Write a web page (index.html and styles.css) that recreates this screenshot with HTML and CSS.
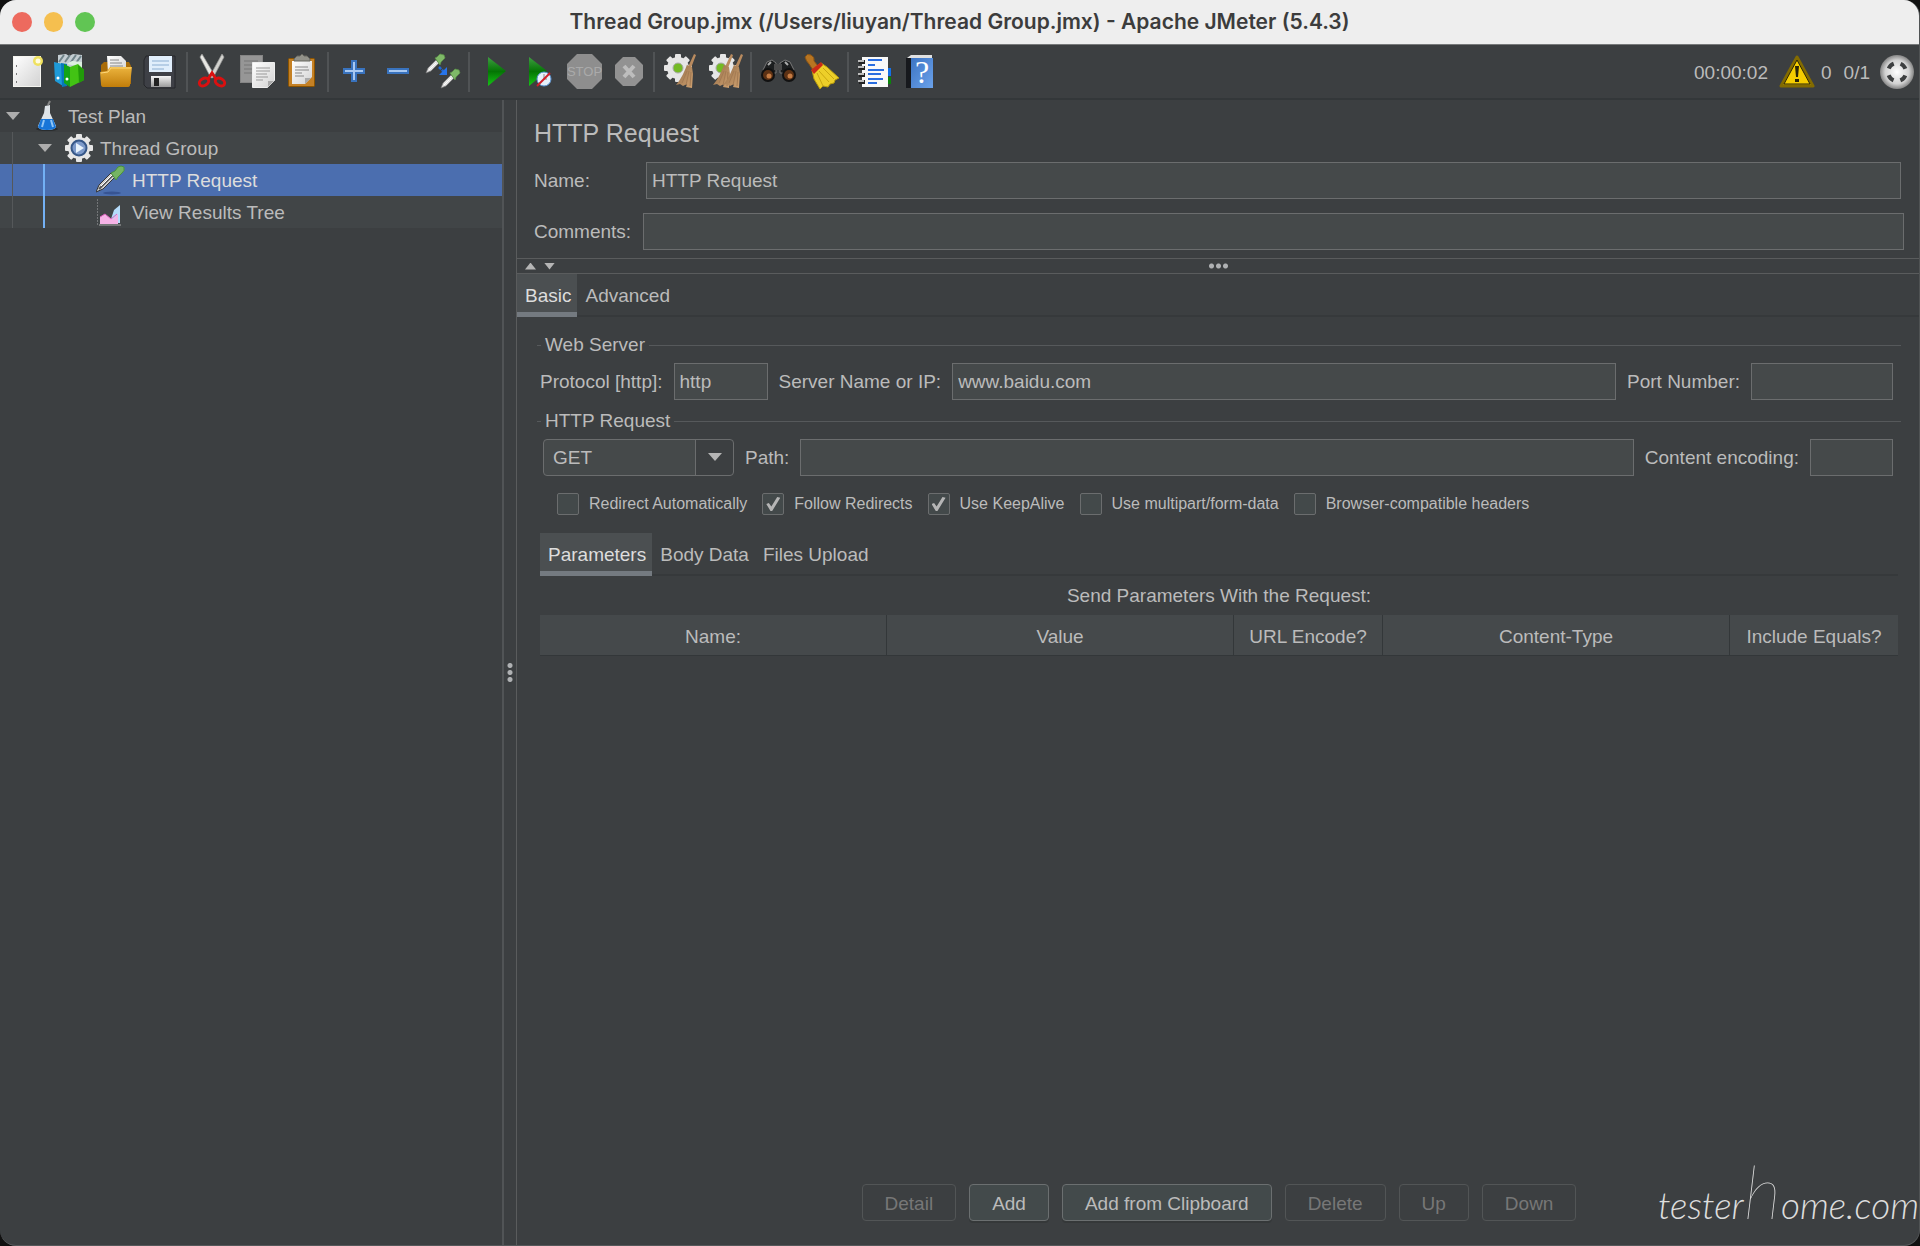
FILE: index.html
```html
<!DOCTYPE html>
<html lang="en">
<head>
  <meta charset="utf-8">
  <title>Thread Group.jmx - Apache JMeter (5.4.3)</title>
  <link rel="stylesheet" href="styles.css">
</head>
<body>
  <!-- shared gradients and shapes -->
  <svg class="defs" aria-hidden="true">
    <defs>
      <linearGradient id="paper" x1="0" y1="0" x2="1" y2="1"><stop offset="0" stop-color="#fff"/><stop offset="1" stop-color="#d2d2d2"/></linearGradient>
      <linearGradient id="steel" x1="0" y1="0" x2="0" y2="1"><stop offset="0" stop-color="#f4f4f4"/><stop offset="1" stop-color="#9b9b9b"/></linearGradient>
      <linearGradient id="gold" x1="0" y1="0" x2="0" y2="1"><stop offset="0" stop-color="#ecb43e"/><stop offset="1" stop-color="#c17d0a"/></linearGradient>
      <linearGradient id="green" x1="0" y1="0" x2="0" y2="1"><stop offset="0" stop-color="#3f9d42"/><stop offset=".5" stop-color="#047504"/><stop offset="1" stop-color="#16c516"/></linearGradient>
      <linearGradient id="book" x1="0" y1="0" x2="1" y2="1"><stop offset="0" stop-color="#3c74c4"/><stop offset="1" stop-color="#6ba2ea"/></linearGradient>
      <linearGradient id="straw" x1="0" y1="0" x2="1" y2="1"><stop offset="0" stop-color="#8d6844"/><stop offset="1" stop-color="#d0a271"/></linearGradient>
      <radialGradient id="ball"><stop offset="0" stop-color="#fff"/><stop offset=".7" stop-color="#d2d2d2"/><stop offset="1" stop-color="#858585"/></radialGradient>
      <g id="gear">
        <g fill="#e6e6e6">
          <rect x="-3" y="-14" width="6" height="28" rx="1"/>
          <rect x="-3" y="-14" width="6" height="28" rx="1" transform="rotate(45)"/>
          <rect x="-3" y="-14" width="6" height="28" rx="1" transform="rotate(90)"/>
          <rect x="-3" y="-14" width="6" height="28" rx="1" transform="rotate(135)"/>
          <circle r="11"/>
        </g>
      </g>
      <g id="broom">
        <path d="M15 0l2 1-5 13-3-1z" fill="#b98b5f"/>
        <path d="M8 11l5 2 1 7-1 14-6-1 1-3-4 2-3-2-4 1c5-6 9-14 12-23z" fill="url(#straw)"/>
        <path d="M8 17L3 29M10 17L7 31M12 18l-1 14" stroke="#a47b53" fill="none"/>
      </g>
      <g id="dropper">
        <path d="M0 19l2-5 8-8 3 3-8 8z" fill="#e2e2e2" stroke="#777" stroke-width=".7"/>
        <path d="M3 16l7-7" stroke="#fff"/>
        <path d="M9 4l2-1 3-3 4 1 1 3-4 4-1 3z" fill="#7fb968" stroke="#5a9446" stroke-width=".7"/>
      </g>
    </defs>
  </svg>

  <div class="window">
    <header class="titlebar">
      <div class="lights">
        <span class="light light-close"></span>
        <span class="light light-min"></span>
        <span class="light light-max"></span>
      </div>
      <h1>Thread Group.jmx (/Users/liuyan/Thread Group.jmx) - Apache JMeter (5.4.3)</h1>
    </header>

    <div class="toolbar">
      <button class="tool" aria-label="New">
        <svg viewBox="0 0 44 44"><rect x="8.500" y="6.500" width="27" height="30" fill="url(#paper)" stroke="#f4f4ef"/><path d="M11 16h1M11 24h1M11 32h1" stroke="#777" stroke-width="2"/><circle cx="33" cy="11" r="5" fill="#efe15f"/><circle cx="33" cy="11" r="2.500" fill="#fffce0"/></svg>
      </button>
      <button class="tool" aria-label="Templates">
        <svg viewBox="0 0 44 44"><path d="M9 5l8-1 3 2 4-2 9 1v14L9 16z" fill="#c3cdd2"/><path d="M10 12l5-7M16 12l5-7M22 12l5-7M27 13l5-7" stroke="#6f8389" stroke-width="2"/><path d="M5 12l9 2v22L6 31z" fill="#1e9ad8"/><path d="M12 13l6 1v22l-5 1z" fill="#0878ba"/><path d="M18 14l5-3 10 1v5z" fill="#dcefe0"/><path d="M15 14l6 3v20l-6-4z" fill="#13a416"/><path d="M21 17l8-3 6 6v10l-14 7z" fill="#42c314"/><path d="M29 15l6 5v10l-5 3z" fill="#219a09"/><circle cx="9" cy="28" r="1.500" fill="#fff"/><circle cx="18" cy="29" r="1.500" fill="#fff"/></svg>
      </button>
      <button class="tool" aria-label="Open">
        <svg viewBox="0 0 44 44"><path d="M8 15l3-3h25l2 4v18H8z" fill="#a96c09"/><path d="M14 6h14l5 5v12H15z" fill="url(#paper)"/><path d="M17 10h9M17 13h12M17 16h13" stroke="#888"/><path d="M7 22l7-1 3-4h22l-2 18q0 2-3 2H10q-2 0-2-3z" fill="url(#gold)"/><path d="M8 23l7-1 3-4h20" stroke="#ffd879" fill="none"/></svg>
      </button>
      <button class="tool" aria-label="Save">
        <svg viewBox="0 0 44 44"><path d="M9 6h29v32H10l-3-3V10z" fill="#3e4046" stroke="#25262a"/><rect x="12" y="6" width="23" height="16" fill="#e0eefb"/><path d="M15 11h17M15 15h17M15 19h12" stroke="#8caed1"/><rect x="14" y="26" width="20" height="11" fill="url(#steel)"/><rect x="17" y="28" width="5" height="8" fill="#222"/></svg>
      </button>
      <span class="tool-sep"></span>
      <button class="tool" aria-label="Cut">
        <svg viewBox="0 0 44 44"><path d="M10 7l2-3 13 22-4 2z" fill="#e7e7e3" stroke="#999" stroke-width=".7"/><path d="M34 7l-2-3-12 22 3 2z" fill="#d2d2ce" stroke="#999" stroke-width=".7"/><g fill="none" stroke="#da1010" stroke-width="3"><ellipse cx="14" cy="32" rx="5" ry="3.500" transform="rotate(-30 14 32)"/><ellipse cx="30" cy="32" rx="5" ry="3.500" transform="rotate(30 30 32)"/><path d="M18 29l4-6 4 6"/></g></svg>
      </button>
      <button class="tool" aria-label="Copy">
        <svg viewBox="0 0 44 44"><rect x="6.500" y="5.500" width="22" height="27" fill="#969696" stroke="#858585"/><path d="M10 11h14M10 15h14M10 19h8M10 23h8" stroke="#777"/><path d="M18.500 12.500h22v18l-7 7h-15z" fill="url(#paper)" stroke="#eee"/><path d="M34 37v-6h6z" fill="#aaa"/><path d="M22 18h14M22 21h14M22 24h11M22 27h12M22 30h7" stroke="#999"/></svg>
      </button>
      <button class="tool" aria-label="Paste">
        <svg viewBox="0 0 44 44"><rect x="10.500" y="8.500" width="26" height="28" rx="1" fill="#c58125" stroke="#8b5400"/><path d="M14 11h20v16l-7 7H14z" fill="url(#paper)"/><path d="M27 34v-6h6z" fill="#aaa"/><path d="M16 9l3-3h3l2-2 2 2h3l3 3v2H16z" fill="#92928a" stroke="#66665f"/><path d="M17 17h13M17 20h14M17 23h7M17 26h9" stroke="#888"/></svg>
      </button>
      <span class="tool-sep"></span>
      <button class="tool" aria-label="Expand All">
        <svg viewBox="0 0 44 44"><path d="M21 11h4v8h8v4h-8v8h-4v-8h-8v-4h8z" fill="#a9c9f1" stroke="#3973be" stroke-width="2"/></svg>
      </button>
      <button class="tool" aria-label="Collapse All">
        <svg viewBox="0 0 44 44"><path d="M13 19h20v4H13z" fill="#a9c9f1" stroke="#3973be" stroke-width="2"/></svg>
      </button>
      <button class="tool" aria-label="Toggle">
        <svg viewBox="0 0 44 44"><use href="#dropper" x="7" y="4"/><use href="#dropper" x="22" y="19"/><path d="M20 17l5 5" stroke="#2168d6" stroke-width="2.500" stroke-dasharray="3 1"/><path d="M28 17v8h-8z" fill="#2774eb"/></svg>
      </button>
      <span class="tool-sep"></span>
      <button class="tool" aria-label="Start">
        <svg viewBox="0 0 44 44"><path d="M16 7l18 14-18 15z" fill="url(#green)"/></svg>
      </button>
      <button class="tool" aria-label="Start no pauses">
        <svg viewBox="0 0 44 44"><path d="M13 7l18 14-18 15z" fill="url(#green)"/><circle cx="28" cy="29" r="7" fill="#e6f0fa" stroke="#5993d3"/><path d="M28 24v5h3" stroke="#888" fill="none"/><path d="M34 23L21 36" stroke="#d01e27" stroke-width="2"/></svg>
      </button>
      <button class="tool" aria-label="Stop" disabled>
        <svg viewBox="0 0 44 44"><path d="M17 4h15l10 10v15L32 39H17L7 29V14z" fill="#8e8e8e"/><text x="24.500" y="26" class="stop-text">STOP</text></svg>
      </button>
      <button class="tool" aria-label="Shutdown" disabled>
        <svg viewBox="0 0 44 44"><path d="M19 7h12l8 8v13l-8 8H19l-8-8V15z" fill="#929292"/><path d="M20 16l10 11M30 16L20 27" stroke="#bdbdbd" stroke-width="4"/></svg>
      </button>
      <span class="tool-sep"></span>
      <button class="tool" aria-label="Clear">
        <svg viewBox="0 0 44 44"><use href="#gear" x="21" y="18"/><circle cx="21" cy="18" r="5" fill="#74ba24" stroke="#aaa"/><use href="#broom" x="22" y="4"/></svg>
      </button>
      <button class="tool" aria-label="Clear All">
        <svg viewBox="0 0 44 44"><use href="#gear" x="22" y="18"/><circle cx="20" cy="18" r="5" fill="#74ba24" stroke="#aaa"/><use href="#broom" x="15" y="4"/><use href="#broom" x="25" y="4"/></svg>
      </button>
      <span class="tool-sep"></span>
      <button class="tool" aria-label="Search">
        <svg viewBox="0 0 44 44"><path d="M9 20l4-8 5-2 4 3v10h-7zM40 20l-4-8-5-2-5 3v10h8z" fill="#1c1e1f" stroke="#777"/><path d="M20 14h8v6h-8z" fill="#4b4b4b"/><path d="M14 15l3-3M34 15l-3-3" stroke="#aaa" stroke-width="2"/><g fill="#5c3114" stroke="#111" stroke-width="2"><circle cx="14" cy="25" r="6"/><circle cx="35" cy="25" r="6"/></g><g fill="#c47b43"><circle cx="15" cy="26" r="2.500"/><circle cx="36" cy="26" r="2.500"/></g></svg>
      </button>
      <button class="tool" aria-label="Reset Search">
        <svg viewBox="0 0 44 44"><path d="M7 7q2-4 6-2 4 2 3 6l4 5-5 4-4-6q-3-3-4-7z" fill="#b77522" stroke="#8b5515"/><path d="M14 20l9-7 6 4 12 11-4 2-1 3-4 1-2 3-5-1-3 3-6-10z" fill="#edcf29" stroke="#b69a0d"/><path d="M21 21l10 11M19 23l6 13M25 18l11 11" stroke="#c9a710"/><path d="M13 20l10-8 2 3-9 9z" fill="#c92a18"/></svg>
      </button>
      <span class="tool-sep"></span>
      <button class="tool" aria-label="Function Helper">
        <svg viewBox="0 0 44 44"><path d="M35 18h5v8h-5z" fill="#1471e8"/><path d="M35 27h5v7h-5z" fill="#0b850b"/><rect x="11" y="7" width="26" height="30" fill="#f9f9f9"/><path d="M17 10h14M17 15h7M17 20h16M17 24h13M17 29h15M17 33h9" stroke="#296de0" stroke-width="2"/><path d="M8 12h6M8 18h6M8 25h6M8 32h6" stroke="#222" stroke-width="4"/><path d="M7 11h6M7 17h6M7 24h6M7 31h6" stroke="#bbb" stroke-width="2"/></svg>
      </button>
      <button class="tool" aria-label="Help">
        <svg viewBox="0 0 44 44"><path d="M12 8l4-3h21v4H12z" fill="#e1e1e1"/><rect x="11" y="8" width="6" height="30" fill="#17191d"/><rect x="16" y="8" width="22" height="30" fill="url(#book)"/><text x="27" y="33" class="help-text">?</text></svg>
      </button>

      <div class="status">
        <span class="elapsed">00:00:02</span>
        <svg class="status-icon" viewBox="0 0 36 36"><path d="M18 3l16 29H2z" fill="#f5cd00" stroke="#836b00" stroke-width="3" stroke-linejoin="round"/><path d="M18 6l13 24H5z" fill="none" stroke="#292407"/><path d="M16 12h4l-1 11h-2z" fill="#292407"/><rect x="16" y="25" width="4" height="3" fill="#292407"/></svg>
        <span class="errors">0</span>
        <span class="threads">0/1</span>
        <svg class="status-icon" viewBox="0 0 36 36"><circle cx="18" cy="18" r="17" fill="url(#ball)"/><circle cx="18" cy="18" r="9" fill="none" stroke="#3d3f40" stroke-width="4" stroke-dasharray="7.100 7" stroke-dashoffset="-3.500"/></svg>
      </div>
    </div>

    <div class="content">
      <nav class="tree">
        <div class="tree-row">
          <span class="toggle"></span>
          <svg class="node-icon" viewBox="0 0 32 32"><ellipse cx="15" cy="29" rx="11" ry="2" fill="#292c2e"/><path d="M13 6l5-1v8l6 13q0 4-9 4t-9-4l6-13z" fill="#dfe4e8"/><path d="M9 19h12l3 8q-1 3-9 3t-9-3z" fill="#1775d8"/><path d="M12 20l-2 7M19 20l2 7" stroke="#8fc5f6" stroke-width="2"/><path d="M16 5l2-4" stroke="#888" stroke-width="2"/></svg>
          <span class="node-name">Test Plan</span>
        </div>
        <div class="tree-row striped">
          <span class="guide"></span>
          <span class="toggle"></span>
          <svg class="node-icon" viewBox="0 0 32 32"><use href="#gear" x="15" y="16"/><circle cx="15" cy="16" r="7.500" fill="#7d9aca" stroke="#365788" stroke-width="2"/><path d="M12 11l8 5-8 5z" fill="#e7f2fc"/></svg>
          <span class="node-name">Thread Group</span>
        </div>
        <div class="tree-row selected">
          <span class="guide"></span>
          <span class="guide guide-active"></span>
          <span class="toggle-space"></span>
          <svg class="node-icon" viewBox="0 0 32 32"><ellipse cx="16" cy="29" rx="9" ry="1.500" fill="#375493"/><path d="M0 28l3-7 12-12 4 4L7 25z" fill="#d5d5d5" stroke="#333"/><path d="M3 25l14-14" stroke="#555" stroke-width="2"/><path d="M5 22L17 10" stroke="#fff"/><path d="M15 9l4-2 3-4q3-2 6 0 1 4-2 6l-4 4-2 3z" fill="#75b463" stroke="#4a913c"/></svg>
          <span class="node-name">HTTP Request</span>
        </div>
        <div class="tree-row striped">
          <span class="guide"></span>
          <span class="guide guide-active"></span>
          <span class="toggle-space"></span>
          <svg class="node-icon" viewBox="0 0 32 32"><path d="M1.500 3v26" stroke="#737678" stroke-dasharray="2 1"/><path d="M15 23l3-9 6-5v18H15z" fill="#b5dcfb"/><path d="M4 28v-7l5-3 5 4 3 1 5-5v10z" fill="#f5b2e6"/><path d="M4 21l5-3 6 5 6-5" stroke="#db63be" fill="none"/><path d="M3 29h22" stroke="#aaa"/></svg>
          <span class="node-name">View Results Tree</span>
        </div>
      </nav>

      <div class="divider"><span class="grip grip-vertical"></span></div>

      <main class="editor">
        <section class="identity">
          <h2>HTTP Request</h2>
          <div class="identity-row">
            <label for="name">Name:</label>
            <input class="field field-inset" type="text" id="name" value="HTTP Request">
          </div>
          <div class="identity-row">
            <label for="comments">Comments:</label>
            <input class="field" type="text" id="comments">
          </div>
        </section>

        <div class="splitter">
          <div class="arrows">
            <span class="arrow-up"></span>
            <span class="arrow-down"></span>
          </div>
          <span class="grip"></span>
        </div>

        <div class="tabs">
          <button class="tab active">Basic</button>
          <button class="tab">Advanced</button>
        </div>

        <div class="basic">
          <fieldset>
            <legend>Web Server</legend>
            <div class="form-row">
              <label for="protocol">Protocol [http]:</label>
              <input class="field field-protocol" type="text" id="protocol" value="http">
              <label for="server">Server Name or IP:</label>
              <input class="field field-grow" type="text" id="server" value="www.baidu.com">
              <label for="port">Port Number:</label>
              <input class="field field-port" type="text" id="port">
            </div>
          </fieldset>

          <fieldset>
            <legend>HTTP Request</legend>
            <div class="form-row">
              <div class="combo">
                <select id="method" aria-label="Method">
                  <option>GET</option>
                  <option>POST</option>
                  <option>PUT</option>
                  <option>DELETE</option>
                </select>
              </div>
              <label for="path">Path:</label>
              <input class="field field-grow" type="text" id="path">
              <label for="encoding">Content encoding:</label>
              <input class="field field-encoding" type="text" id="encoding">
            </div>
            <div class="options">
              <label><input type="checkbox">Redirect Automatically</label>
              <label><input type="checkbox" checked>Follow Redirects</label>
              <label><input type="checkbox" checked>Use KeepAlive</label>
              <label><input type="checkbox">Use multipart/form-data</label>
              <label><input type="checkbox">Browser-compatible headers</label>
            </div>
          </fieldset>

          <div class="params">
            <div class="tabs">
              <button class="tab active">Parameters</button>
              <button class="tab">Body Data</button>
              <button class="tab">Files Upload</button>
            </div>
            <table>
              <caption>Send Parameters With the Request:</caption>
              <thead>
                <tr>
                  <th>Name:</th>
                  <th>Value</th>
                  <th class="col-encode">URL Encode?</th>
                  <th>Content-Type</th>
                  <th class="col-equals">Include Equals?</th>
                </tr>
              </thead>
            </table>
          </div>

          <div class="actions">
            <button class="btn" disabled>Detail</button>
            <button class="btn">Add</button>
            <button class="btn">Add from Clipboard</button>
            <button class="btn" disabled>Delete</button>
            <button class="btn" disabled>Up</button>
            <button class="btn" disabled>Down</button>
          </div>
        </div>
      </main>
    </div>
    <div class="watermark">tester<span class="tall">h</span>ome.com</div>
  </div>
</body>
</html>
```
FILE: styles.css
```css
* {
  box-sizing: border-box;
}
body {
  margin: 0;
  background-color: #111;
  color: #bbb;
  font-family: "Liberation Sans", Arial, sans-serif;
  font-size: 19px;
  line-height: 22px;
}
button, input, select {
  font: inherit;
  color: inherit;
}
button {
  background: none;
  border: none;
  padding: 0;
}
.defs {
  position: absolute;
  width: 0;
  height: 0;
}
.window {
  position: relative;
  display: flex;
  flex-direction: column;
  min-height: 100vh;
  background-color: #3c3f41;
  border-right: 1px solid #505354;
  border-bottom: 1px solid #55585a;
  border-radius: 16px;
  overflow: hidden;
}

/* title bar */
.titlebar {
  display: flex;
  align-items: center;
  height: 45px;
  padding: 0 12px;
  background-color: #eee;
  border-bottom: 1px solid #77797a;
}
.titlebar h1 {
  flex: 1;
  margin: 0 83px 0 0;
  text-align: center;
  color: #3c3c3c;
  font-family: Inter, sans-serif;
  font-size: 21px;
  font-weight: 600;
}
.lights {
  display: flex;
  gap: 12px;
  width: 83px;
}
.light {
  width: 20px;
  height: 20px;
  border-radius: 50%;
}
.light-close { background-color: #ed6a5e; }
.light-min { background-color: #f5bf4f; }
.light-max { background-color: #61c554; }

/* toolbar */
.toolbar {
  display: flex;
  align-items: center;
  height: 55px;
  padding: 0 4px 0 5px;
  border-bottom: 2px solid #333739;
}
.tool, .tool svg {
  display: block;
  width: 44px;
  height: 44px;
}
.tool-sep {
  width: 2px;
  height: 40px;
  margin: 0 2px 0 5px;
  background-color: #505355;
}
.stop-text {
  fill: #aaa;
  font-size: 13px;
  text-anchor: middle;
}
.help-text {
  fill: #fff;
  font-family: "Liberation Serif", serif;
  font-size: 32px;
  text-anchor: middle;
}
.status {
  display: flex;
  align-items: center;
  margin-left: auto;
}
.status span {
  padding-top: 2px;
}
.status-icon {
  width: 36px;
  height: 36px;
}
.elapsed {
  margin-right: 11px;
}
.errors {
  margin-left: 6px;
}
.threads {
  margin: 0 9px 0 12px;
}

/* test plan tree */
.content {
  display: flex;
  flex: 1;
}
.tree {
  width: 502px;
}
.tree-row {
  display: flex;
  align-items: center;
  height: 32px;
}
.striped {
  background-color: #414547;
}
.selected {
  background-color: #4b6eaf;
}
.toggle {
  width: 14px;
  height: 8px;
  margin: 0 12px 0 6px;
  background-color: #adadad;
  clip-path: polygon(0 0, 100% 0, 50% 100%);
}
.toggle-space {
  width: 32px;
}
.guide {
  width: 20px;
  height: 100%;
  margin-left: 12px;
  border-left: 1px solid #55585a;
}
.guide-active {
  width: 21px;
  margin-left: 11px;
  border-left: 2px solid #73b0f4;
}
.node-icon {
  width: 32px;
  height: 32px;
}
.node-name {
  margin-left: 4px;
  padding-top: 2px;
}
.selected .node-name {
  color: #ddd;
}

.divider {
  display: flex;
  align-items: center;
  justify-content: center;
  width: 15px;
  border-left: 2px solid #515456;
  border-right: 1px solid #5a5c5d;
}
.grip {
  width: 21px;
  height: 6px;
  background: radial-gradient(circle, #afb1b3 2px, transparent 3px) 0 0 / 7px 6px;
}
.grip-vertical {
  width: 6px;
  height: 21px;
  background-size: 6px 7px;
}

/* sampler editor */
.editor {
  display: flex;
  flex: 1;
  flex-direction: column;
  min-width: 0;
}
.identity {
  padding: 18px 15px 8px 17px;
}
.identity h2 {
  margin: 0 0 14px;
  font-size: 25px;
  font-weight: normal;
  line-height: 30px;
}
.identity-row {
  display: flex;
  align-items: center;
  margin-bottom: 14px;
}
.identity-row:last-child {
  margin-bottom: 0;
}
.identity-row label {
  width: 109px;
}
.field {
  min-width: 0;
  height: 37px;
  padding: 0 5px;
  background-color: #45494a;
  border: 1px solid #6b6d6e;
  border-radius: 0;
}
.identity-row .field {
  flex: 1;
}
.identity-row .field-inset {
  margin: 0 3px;
}
.splitter {
  display: flex;
  align-items: center;
  height: 16px;
  padding: 0 8px;
  border-top: 1px solid #5a5c5d;
  border-bottom: 1px solid #5a5c5d;
}
.splitter::after {
  content: "";
  flex: 1;
}
.arrows {
  display: flex;
  flex: 1;
  gap: 8px;
}
.arrow-up, .arrow-down {
  width: 11px;
  height: 7px;
  background-color: #b5b5b5;
  clip-path: polygon(0 100%, 50% 0, 100% 100%);
}
.arrow-down {
  clip-path: polygon(0 0, 100% 0, 50% 100%);
}

.tabs {
  display: flex;
  height: 43px;
  box-shadow: inset 0 -2px #36393b;
}
.tab {
  padding: 0 6px 0 8px;
}
.tab.active {
  padding-top: 5px;
  background-color: #4b4f51;
  border-bottom: 5px solid #747a80;
  color: #ddd;
}

.basic {
  display: flex;
  flex: 1;
  flex-direction: column;
  padding: 17px 18px 24px 20px;
}
fieldset {
  min-width: 0;
  margin: 0 0 10px;
  padding: 7px 8px 0 3px;
  border: 0;
  border-top: 1px solid #56595b;
}
legend {
  margin-left: 1px;
  padding: 0 4px;
}
.form-row {
  display: flex;
  align-items: center;
  gap: 11px;
}
.field-protocol {
  width: 94px;
}
.field-grow {
  flex: 1;
}
.field-port {
  width: 142px;
}
.field-encoding {
  width: 83px;
}
.combo {
  position: relative;
  margin-left: 3px;
}
.combo select {
  display: block;
  width: 191px;
  height: 37px;
  padding: 0 9px;
  appearance: none;
  background: linear-gradient(to left, #3c3f41 37px, #6b6d6e 37px, #6b6d6e 38px, #45494a 38px);
  border: 1px solid #6b6d6e;
  border-radius: 4px;
}
.combo::after {
  content: "";
  position: absolute;
  top: 14px;
  right: 12px;
  width: 14px;
  height: 8px;
  background-color: #b5b5b5;
  clip-path: polygon(0 0, 100% 0, 50% 100%);
  pointer-events: none;
}
.options {
  display: flex;
  gap: 15px;
  padding: 17px 0 0 17px;
  font-size: 16px;
}
.options label {
  display: flex;
  align-items: center;
}
.options input {
  width: 22px;
  height: 22px;
  margin: 0 10px 0 0;
  appearance: none;
  background-color: #43494a;
  border: 1px solid #6b6d6e;
  border-radius: 2px;
}
.options input:checked::before {
  content: "";
  display: block;
  width: 14px;
  height: 14px;
  margin: 3px;
  background-color: #b5b5b5;
  clip-path: polygon(0 50%, 18% 42%, 36% 68%, 78% 0, 100% 6%, 42% 100%, 30% 100%);
}

.params {
  margin: 8px 3px 0;
}
table {
  width: 100%;
  table-layout: fixed;
  border-collapse: separate;
  border-spacing: 0;
}
caption {
  padding: 9px 0 8px;
}
th {
  height: 41px;
  padding: 3px 0 0;
  background-color: #45494b;
  border-right: 1px solid #333739;
  border-bottom: 1px solid #333739;
  font-weight: normal;
}
th:last-child {
  border-right: 0;
}
.col-encode {
  width: 149px;
}
.col-equals {
  width: 168px;
}

.actions {
  display: flex;
  justify-content: center;
  gap: 13px;
  margin-top: auto;
}
.btn {
  height: 37px;
  padding: 2px 22px 0;
  background-color: #434a4b;
  border: 1px solid #6b6f70;
  border-radius: 4px;
  box-shadow: 0 2px #353839;
}
.btn:disabled {
  background-color: transparent;
  border-color: #525556;
  box-shadow: none;
  color: #777;
}

.watermark {
  position: absolute;
  right: 0;
  bottom: 15px;
  color: #ddd;
  font-family: Lato, sans-serif;
  font-size: 37px;
  font-style: italic;
  font-weight: 300;
  line-height: 50px;
}
.tall {
  font-size: 74px;
  font-weight: 100;
}
```
